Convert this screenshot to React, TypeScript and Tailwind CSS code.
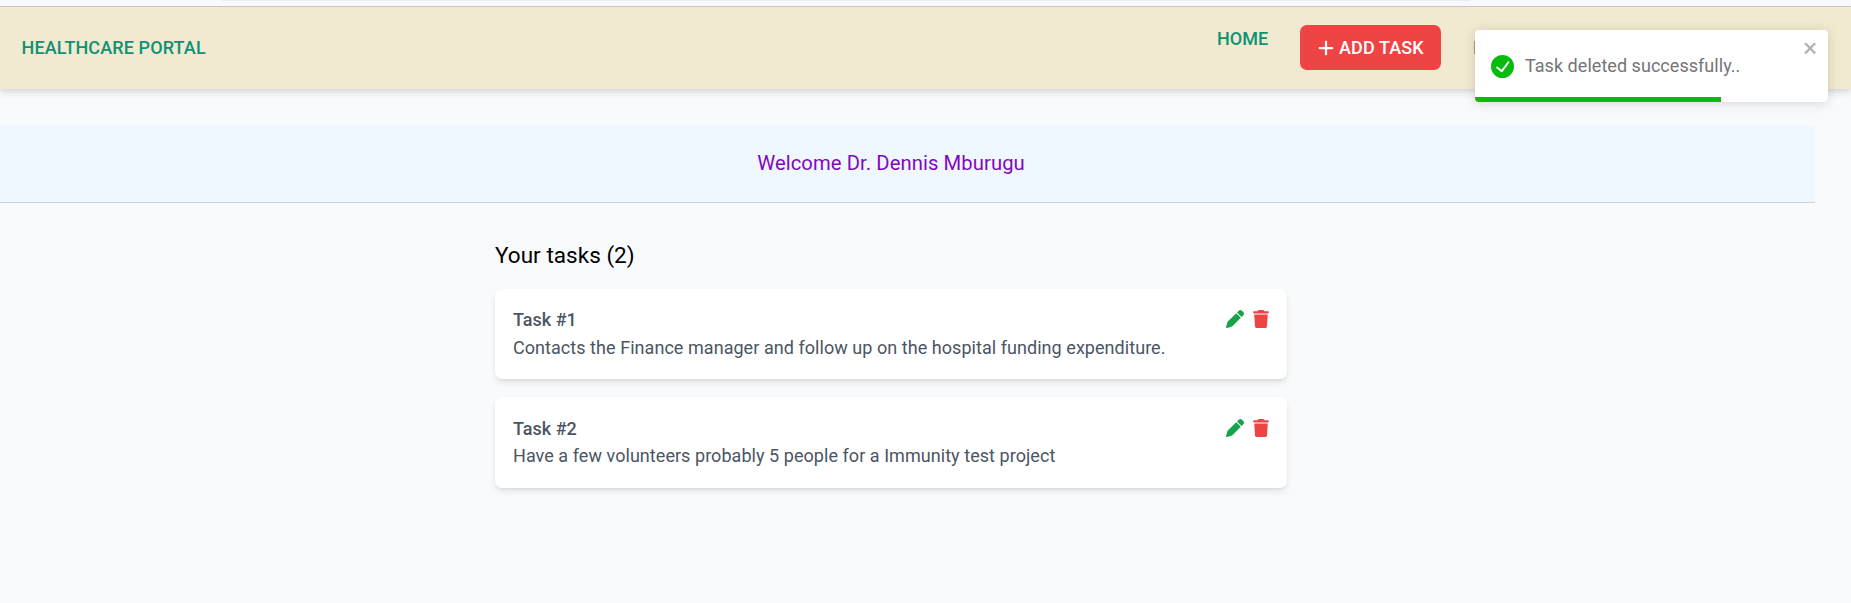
import { FaPen, FaPlus, FaTrash } from "react-icons/fa6";

const tasks = [
  {
    id: 1,
    title: "Task #1",
    body: "Contacts the Finance manager and follow up on the hospital funding expenditure.",
    card: "h-[90px] pt-[17px]",
    line: "mt-[1px]",
    icons: "mt-[4px]",
  },
  {
    id: 2,
    title: "Task #2",
    body: "Have a few volunteers probably 5 people for a Immunity test project",
    card: "h-[91px] pt-[18px]",
    line: "mt-0",
    icons: "mt-[4px]",
  },
];

function Toast() {
  return (
    <div className="absolute left-[1475px] top-[30px] z-20 h-[72px] w-[353px] overflow-hidden rounded-[4px] bg-white shadow-[0_1px_11px_0_rgba(0,0,0,0.1),0_2px_17px_0_rgba(0,0,0,0.05)]">
      <div className="flex items-start pl-4 pr-[9px]">
        <svg viewBox="0 0 24 24" className="mt-[25px] size-[23px] shrink-0" fill="#07bc0c">
          <path d="M12 0a12 12 0 1012 12A12.014 12.014 0 0012 0zm6.927 8.2l-6.845 9.289a1.011 1.011 0 01-1.43.188l-4.888-3.908a1 1 0 111.25-1.562l4.076 3.261 6.227-8.451a1 1 0 111.61 1.183z" />
        </svg>
        <p className="ml-[11px] mt-[23px] flex-1 whitespace-nowrap text-[18px] leading-[26px] tracking-[0.04px] text-[#757575]">
          Task deleted successfully..
        </p>
        <svg viewBox="0 0 14 16" className="mt-[9px] h-[18px] w-[16px] shrink-0" fill="#b3b3b3">
          <path fillRule="evenodd" d="M7.71 8.23l3.75 3.75-1.48 1.48-3.75-3.75-3.75 3.75L1 11.98l3.75-3.75L1 4.48 2.48 3l3.75 3.75L9.98 3l1.48 1.48-3.75 3.75z" />
        </svg>
      </div>
      <div className="absolute bottom-0 left-0 h-[5px] w-[246px] bg-[#07bc0c]" />
    </div>
  );
}

export default function App() {
  return (
    <div className="relative h-[603px] w-[1851px] overflow-hidden bg-[#f9fafc] font-['Roboto',sans-serif]">
      <div className="h-[7px] border-b border-[#c9cacf] bg-[#f9f9fb]">
        <div className="ml-[222px] h-px w-[1248px] bg-[#ebebed]" />
      </div>
      <header className="relative flex h-[82px] items-start bg-[#f2ead0] font-medium text-[#0d9275] shadow-[0_4px_7px_0_rgba(0,0,0,0.1),0_2px_4px_0_rgba(0,0,0,0.05)]">
        <span className="ml-[21.5px] mt-[28px] text-[18px] leading-[26px] tracking-[0.12px]">HEALTHCARE PORTAL</span>
        <nav className="ml-auto flex w-[634px] items-start text-[18px] leading-[26px] tracking-[0.05px]">
          <a className="mt-[19px] w-[83px]">HOME</a>
          <button className="mt-[18px] flex h-[45px] w-[141px] items-center rounded-[7px] bg-[#ef4444] pl-[17px] text-white">
            <FaPlus className="mr-[4px] size-[18px]" />
            <span className="whitespace-nowrap tracking-[0.12px]">ADD TASK</span>
          </button>
          <a className="ml-[32px] mt-[28px]">LOGOUT</a>
        </nav>
      </header>
      <main>
        <div className="mt-9 flex h-[78px] w-[1815px] justify-center border-b border-[#cdd3da] bg-[#eff7ff] pr-[33px]">
          <h1 className="mt-[23px] text-[20.25px] leading-[31px] tracking-[0.07px] text-[#8208c0]">Welcome Dr. Dennis Mburugu</h1>
        </div>
        <section className="ml-[495px] w-[792px]">
          <h2 className="pt-[37px] text-[22.5px] leading-[31px] tracking-[0.03px] text-black">Your tasks (2)</h2>
          <ul className="mt-[18px] flex flex-col gap-[18px]">
            {tasks.map((t) => (
              <li
                key={t.id}
                className={`${t.card} flex justify-between rounded-[7px] bg-white pl-[18px] pr-[18px] shadow-[0_4px_7px_-1px_rgba(0,0,0,0.1),0_2px_4px_-2px_rgba(0,0,0,0.1)]`}
              >
                <div className="text-[18px] leading-[27px] text-[#4b5563]">
                  <h3 className="font-medium">{t.title}</h3>
                  <p className={`${t.line} tracking-[0.05px]`}>{t.body}</p>
                </div>
                <div className={`${t.icons} flex items-start gap-[9px]`}>
                  <FaPen className="size-[18px] text-[#16a34a]" />
                  <FaTrash className="h-[18px] w-[16px] text-[#ef4444]" />
                </div>
              </li>
            ))}
          </ul>
        </section>
      </main>
      <Toast />
    </div>
  );
}
